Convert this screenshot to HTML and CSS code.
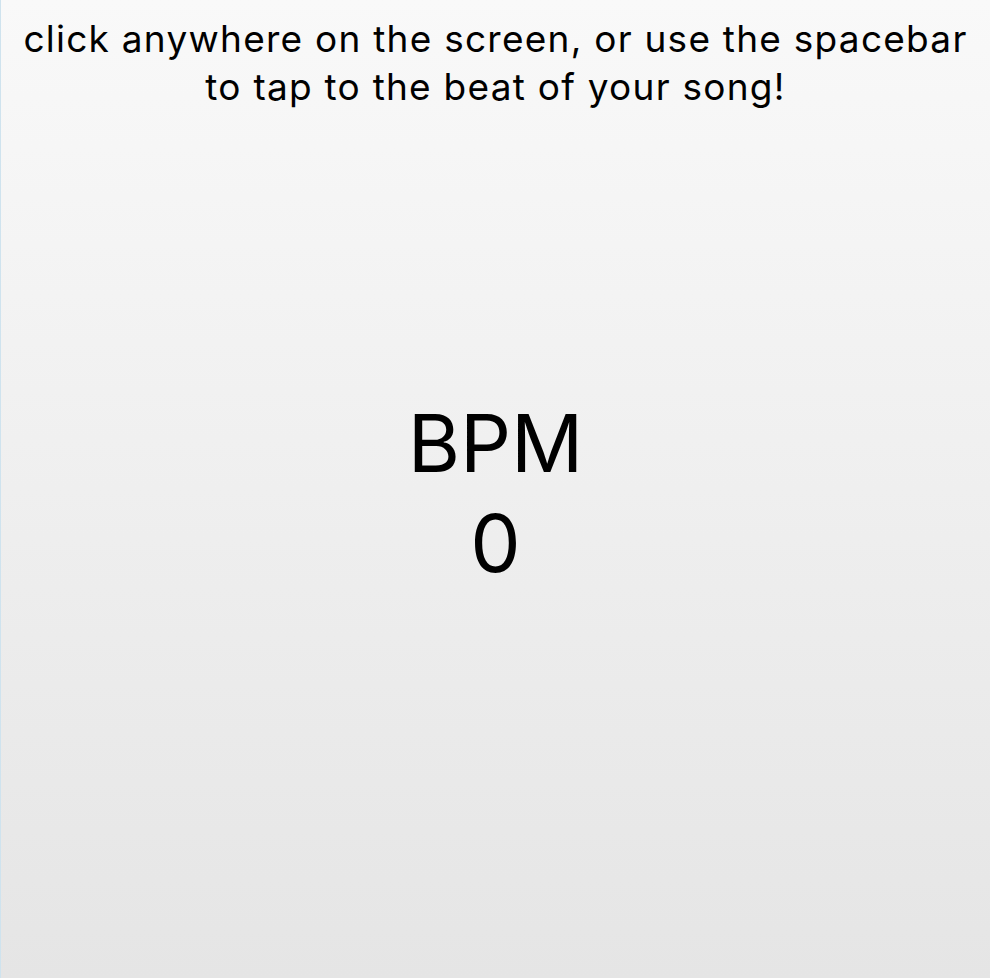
FILE: index.html
```html
<!DOCTYPE html>
<html>
<head>
<meta charset="utf-8">
<link rel="stylesheet" href="styles.css">
</head>
<body>
<div class="app">
  <p class="hint">click anywhere on the screen, or use the spacebar to tap to the beat of your song!</p>
  <div class="bpm">
    <div class="bpm-label">BPM</div>
    <div class="bpm-value">0</div>
  </div>
</div>
</body>
</html>
```
FILE: styles.css
```css
html, body {
  margin: 0;
  padding: 0;
  height: 100%;
}
body {
  background: linear-gradient(to bottom, #f9f9f9 0%, #e5e5e5 100%);
  border-left: 1px solid #cfe3ee;
  box-sizing: border-box;
  font-family: Inter, "Liberation Sans", Arial, sans-serif;
  color: #000;
}
.app {
  height: 100%;
  display: flex;
  flex-direction: column;
  align-items: center;
}
.hint {
  margin: 15px 0 0;
  text-align: center;
  font-size: 37px;
  line-height: 48px;
  letter-spacing: 1.25px;
  max-width: 962px;
}
.bpm {
  margin-top: 282px;
  text-align: center;
  font-size: 80px;
  line-height: 100px;
}
```
